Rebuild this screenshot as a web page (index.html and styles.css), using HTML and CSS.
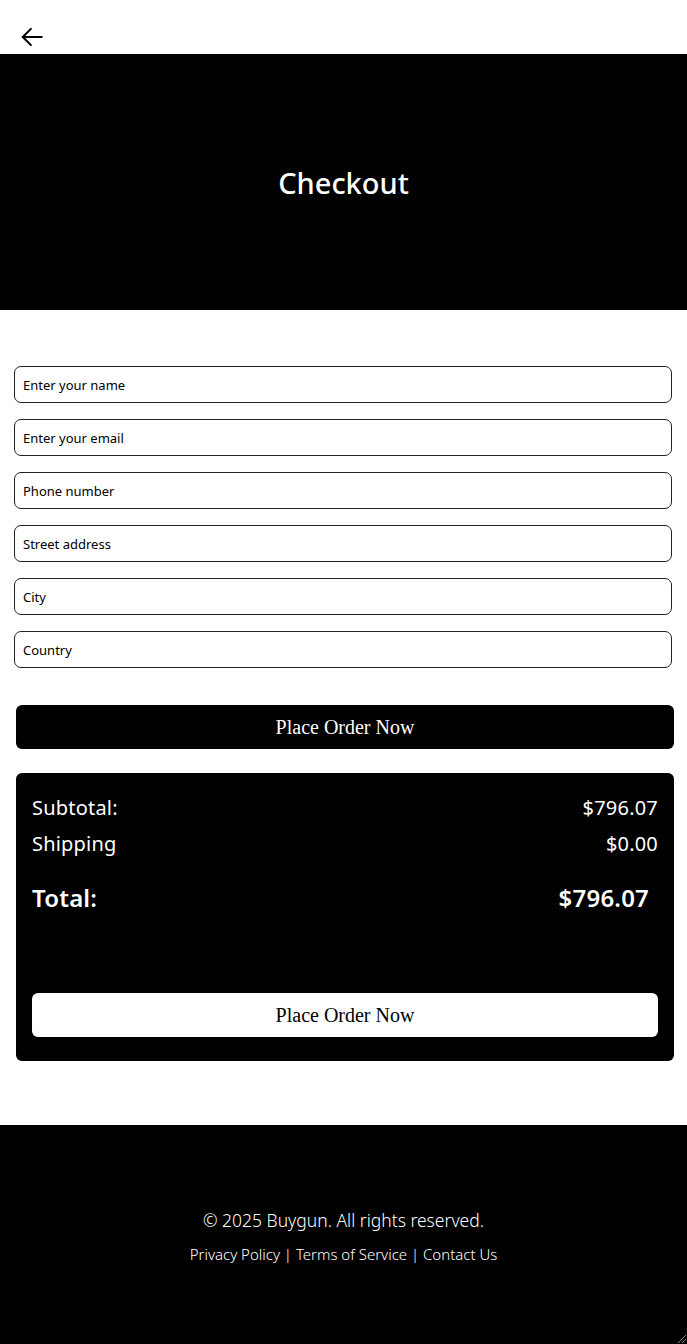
FILE: index.html
```html
<!DOCTYPE html>
<html lang="en">
<head>
<meta charset="utf-8">
<title>Checkout</title>
<link rel="stylesheet" href="styles.css">
</head>
<body>
<header class="topbar">
  <button class="back" aria-label="Back">
    <svg width="26" height="26" viewBox="0 0 24 24" fill="none" stroke="#000" stroke-width="1.9" stroke-linecap="round" stroke-linejoin="round"><path d="M21 12H3.5"/><path d="M11 4.5L3.5 12l7.5 7.5"/></svg>
  </button>
</header>
<section class="hero">
  <h1>Checkout</h1>
</section>
<main class="content">
  <form class="form">
    <input class="field" type="text" placeholder="Enter your name">
    <input class="field" type="email" placeholder="Enter your email">
    <input class="field" type="tel" placeholder="Phone number">
    <input class="field" type="text" placeholder="Street address">
    <input class="field" type="text" placeholder="City">
    <input class="field" type="text" placeholder="Country">
  </form>
  <button class="btn btn-dark">Place Order Now</button>
  <div class="summary">
    <div class="row"><span>Subtotal:</span><span>$796.07</span></div>
    <div class="row"><span>Shipping</span><span>$0.00</span></div>
    <div class="row total"><span>Total:</span><span>$796.07</span></div>
    <button class="btn btn-light">Place Order Now</button>
  </div>
</main>
<footer class="footer">
  <p class="copy">© 2025 Buygun. All rights reserved.</p>
  <p class="links"><a href="#">Privacy Policy</a> | <a href="#">Terms of Service</a> | <a href="#">Contact Us</a></p>
  <svg class="grip" width="12" height="12" viewBox="0 0 12 12"><path d="M11 3L3 11M11 7L7 11" stroke="#888" stroke-width="1"/></svg>
</footer>
</body>
</html>
```
FILE: styles.css
```css
* { box-sizing: border-box; }
html, body { margin: 0; padding: 0; }
body {
  font-family: "Noto Sans", "Open Sans", sans-serif;
  color: #000;
  background: #fff;
}
.topbar {
  height: 54px;
  display: flex;
  align-items: flex-end;
  padding: 0 0 4px 19px;
}
.back {
  background: none;
  border: 0;
  padding: 0;
  width: 26px;
  height: 26px;
  cursor: pointer;
  display: block;
}
.back svg { display: block; }
.hero {
  background: #000;
  height: 256px;
  display: flex;
  align-items: center;
  justify-content: center;
}
.hero h1 {
  margin: 0;
  color: #fff;
  font-size: 29px;
  font-weight: 500;
}
.content {
  padding: 56px 13px 64px 16px;
}
.form {
  display: flex;
  flex-direction: column;
  gap: 16px;
  margin-left: -2px;
  margin-right: 2px;
}
.field {
  height: 37px;
  width: 100%;
  border: 1px solid #222;
  border-radius: 7px;
  padding: 0 8px;
  font-family: inherit;
  font-size: 13px;
  color: #000;
  background: #fff;
}
.field::placeholder { color: #000; }
.btn {
  display: block;
  width: 100%;
  height: 44px;
  border: 0;
  border-radius: 6px;
  font-family: "Liberation Serif", serif;
  font-size: 20px;
  padding-top: 2px;
  cursor: pointer;
}
.btn-dark {
  margin-top: 37px;
  background: #000;
  color: #fff;
}
.btn-light {
  background: #fff;
  color: #000;
  margin-top: 77px;
}
.summary {
  margin-top: 24px;
  background: #000;
  color: #fff;
  border-radius: 6px;
  padding: 17px 16px 24px;
}
.row {
  display: flex;
  justify-content: space-between;
  font-size: 20px;
  line-height: 36px;
  letter-spacing: 0.2px;
}
.row.total {
  font-size: 24px;
  font-weight: 600;
  margin-top: 18px;
  padding-right: 9px;
}
.footer {
  position: relative;
  background: #000;
  color: #fff;
  height: 219px;
  display: flex;
  flex-direction: column;
  align-items: center;
  justify-content: center;
  text-align: center;
}
.footer p { margin: 0; }
.copy {
  font-size: 17.5px;
  font-weight: 300;
  margin-top: 2px !important;
}
.links {
  font-size: 15px;
  font-weight: 300;
  margin-top: 12px !important;
}
.links a { color: #fff; text-decoration: none; }
.grip { position: absolute; right: 0; bottom: 0; }
```
